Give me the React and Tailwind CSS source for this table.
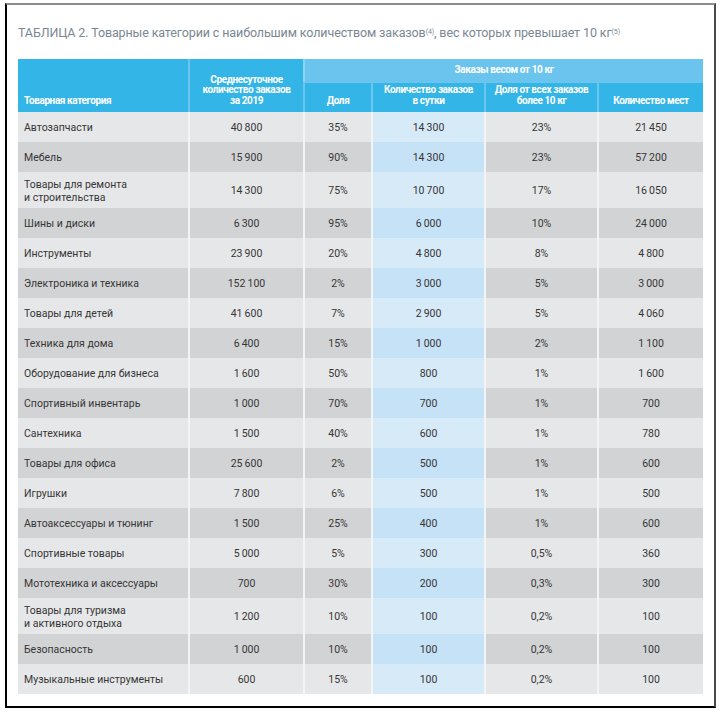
const rows = [
  ["Автозапчасти", "40 800", "35%", "14 300", "23%", "21 450"],
  ["Мебель", "15 900", "90%", "14 300", "23%", "57 200"],
  [["Товары для ремонта", "и строительства"], "14 300", "75%", "10 700", "17%", "16 050"],
  ["Шины и диски", "6 300", "95%", "6 000", "10%", "24 000"],
  ["Инструменты", "23 900", "20%", "4 800", "8%", "4 800"],
  ["Электроника и техника", "152 100", "2%", "3 000", "5%", "3 000"],
  ["Товары для детей", "41 600", "7%", "2 900", "5%", "4 060"],
  ["Техника для дома", "6 400", "15%", "1 000", "2%", "1 100"],
  ["Оборудование для бизнеса", "1 600", "50%", "800", "1%", "1 600"],
  ["Спортивный инвентарь", "1 000", "70%", "700", "1%", "700"],
  ["Сантехника", "1 500", "40%", "600", "1%", "780"],
  ["Товары для офиса", "25 600", "2%", "500", "1%", "600"],
  ["Игрушки", "7 800", "6%", "500", "1%", "500"],
  ["Автоаксессуары и тюнинг", "1 500", "25%", "400", "1%", "600"],
  ["Спортивные товары", "5 000", "5%", "300", "0,5%", "360"],
  ["Мототехника и аксессуары", "700", "30%", "200", "0,3%", "300"],
  [["Товары для туризма", "и активного отдыха"], "1 200", "10%", "100", "0,2%", "100"],
  ["Безопасность", "1 000", "10%", "100", "0,2%", "100"],
  ["Музыкальные инструменты", "600", "15%", "100", "0,2%", "100"],
];

function num(s) {
  return s.replace(" ", "\u2009");
}

export default function App() {
  return (
    <div className="h-[713px] w-[721px] bg-white pl-[5px] pt-[3px] font-['Roboto',sans-serif]">
      <div className="h-[705px] w-[711px] border-t-2 border-l-2 border-b-2 border-r-2 border-t-[#8c8c8c] border-l-black border-b-black border-r-[#4a4a4a] pl-[11px] pt-[20px]">
        <h1 className="text-[12.5px] leading-[16px] font-normal tracking-[-0.12px] text-[#7a8793]">
          ТАБЛИЦА 2. Товарные категории с наибольшим количеством заказов
          <sup className="text-[7px]">(4)</sup>, вес которых превышает 10 кг
          <sup className="text-[7px]">(5)</sup>
        </h1>

        <table className="mt-[18px] w-[685px] table-fixed border-separate border-spacing-0 text-[10.5px] text-[#363636]">
          <colgroup>
            <col className="w-[170px]" />
            <col className="w-[115px]" />
            <col className="w-[68px]" />
            <col className="w-[113px]" />
            <col className="w-[113px]" />
            <col className="w-[106px]" />
          </colgroup>
          <thead className="text-[10px] leading-[10.5px] font-bold tracking-[-0.4px] text-white">
            <tr className="h-[23px]">
              <th rowSpan={2} className="bg-[#34b5e7] pb-[6px] pl-[6px] text-left align-bottom">
                Товарная категория
              </th>
              <th rowSpan={2} className="border-l-2 border-[#6ac6ef] bg-[#34b5e7] pb-[6px] text-center align-bottom">
                Среднесуточное
                <br />
                количество заказов
                <br />
                за 2019
              </th>
              <th colSpan={4} className="border-l-2 border-[#8ed4f3] bg-[#6bc4ee] text-center align-middle">
                Заказы весом от 10 кг
              </th>
            </tr>
            <tr className="h-[30px]">
              <th className="border-l-2 border-t border-[#6ac6ef] bg-[#34b5e7] pb-[6px] text-center align-bottom">Доля</th>
              <th className="border-l-2 border-t border-[#6ac6ef] bg-[#34b5e7] pb-[6px] text-center align-bottom">
                Количество заказов
                <br />в сутки
              </th>
              <th className="border-l-2 border-t border-[#6ac6ef] bg-[#34b5e7] pb-[6px] text-center align-bottom">
                Доля от всех заказов
                <br />
                более 10 кг
              </th>
              <th className="border-l-2 border-t border-[#6ac6ef] bg-[#34b5e7] pb-[6px] text-center align-bottom">
                Количество мест
              </th>
            </tr>
          </thead>
          <tbody>
            {rows.map((r, i) => {
              const dark = i % 2 === 1;
              const gray = dark ? "bg-[#d2d3d5]" : "bg-[#e6e7e8]";
              const blue = dark ? "bg-[#c6e2f6]" : "bg-[#d7eaf8]";
              const two = Array.isArray(r[0]);
              return (
                <tr key={i} className={two ? "h-[36px]" : "h-[30px]"}>
                  <td className={`${gray} pl-[6px] pt-px leading-[13px] align-middle`}>
                    {two ? (
                      <>
                        {r[0][0]}
                        <br />
                        {r[0][1]}
                      </>
                    ) : (
                      r[0]
                    )}
                  </td>
                  <td className={`${gray} border-l-2 border-[#f3f4f5] pt-px text-center`}>{num(r[1])}</td>
                  <td className={`${gray} border-l-2 border-[#f3f4f5] pt-px text-center`}>{r[2]}</td>
                  <td className={`${blue} border-l-2 border-[#f3f4f5] pt-px text-center`}>{num(r[3])}</td>
                  <td className={`${gray} border-l-2 border-[#f3f4f5] pt-px text-center`}>{r[4]}</td>
                  <td className={`${gray} border-l-2 border-[#f3f4f5] pt-px text-center`}>{num(r[5])}</td>
                </tr>
              );
            })}
          </tbody>
        </table>
      </div>
    </div>
  );
}
